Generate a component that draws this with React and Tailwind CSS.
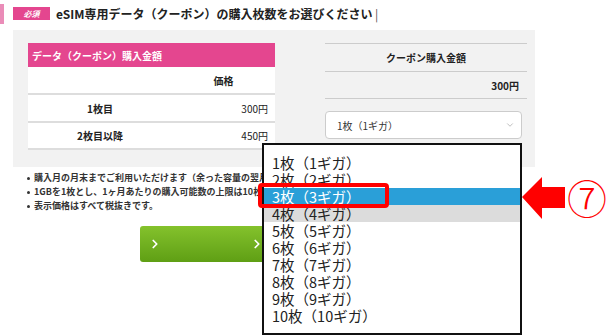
import React from 'react';
import { ChevronDown, ChevronRight } from 'lucide-react';

const options = Array.from({ length: 10 }, (_, i) => `${i + 1}枚（${i + 1}ギガ）`);

const App = () => {
    return (
        <div className="relative w-[609px] h-[336px] overflow-hidden bg-white text-[#222] font-['Noto_Sans_CJK_JP',sans-serif]">

            {/* 見出し */}
            <div className="flex items-center h-[26px] pt-[1px]">
                <div className="w-[4px] h-[20px] bg-[#ea8cb8]"></div>
                <div className="ml-[9px] w-[37px] h-[13px] bg-[#e4468f] flex items-center justify-center text-white text-[8px] font-bold italic leading-none">必須</div>
                <div className="ml-[6px] text-[12px] font-bold leading-none">
                    eSIM専用データ（クーポン）の購入枚数をお選びください <span className="font-normal text-[#555]">|</span>
                </div>
            </div>

            {/* グレーのパネル */}
            <div className="ml-[13px] mt-[4px] w-[522px] bg-[#f2f2f2] flex pt-[13px] pb-[17px] pl-[15px]">
                {/* 左テーブル */}
                <div className="w-[247px] bg-white text-[10px] font-bold">
                    <div className="h-[24px] bg-[#e4468f] text-white flex items-center pl-[4px]">データ（クーポン）購入金額</div>
                    <div className="h-[28px] flex items-center border-b-2 border-[#ddd]">
                        <div className="w-[144px]"></div>
                        <div className="flex-1 text-center">価格</div>
                    </div>
                    <div className="h-[28px] flex items-center border-b-2 border-[#ddd]">
                        <div className="w-[144px] text-center">1枚目</div>
                        <div className="flex-1 text-right pr-[7px] font-normal">300円</div>
                    </div>
                    <div className="h-[27px] flex items-center border-b-2 border-[#ddd]">
                        <div className="w-[144px] text-center">2枚目以降</div>
                        <div className="flex-1 text-right pr-[7px] font-normal">450円</div>
                    </div>
                </div>

                {/* 右カラム */}
                <div className="ml-[50px] w-[202px] text-[10px] font-bold">
                    <div className="h-[29px] flex items-center justify-center border-y border-[#ccc]">クーポン購入金額</div>
                    <div className="h-[27px] flex items-center justify-end pr-[8px] border-b border-[#ccc]">300円</div>
                    <div className="mt-[12px] w-[197px] h-[28px] bg-white border border-[#ccc] rounded-[4px] flex items-center justify-between pl-[11px] pr-[6px] font-normal text-[#333]">
                        <span>1枚（1ギガ）</span>
                        <ChevronDown size={10} strokeWidth={1.5} className="text-[#999]" />
                    </div>
                </div>
            </div>

            {/* 注意書き (右側はプルダウンの下に隠れる) */}
            <ul className="mt-[4px] ml-[27px] w-[235px] overflow-hidden text-[9px] leading-[14px] text-[#333] font-bold">
                <li className="flex items-center gap-[4px] whitespace-nowrap"><span className="w-[3px] h-[3px] shrink-0 rounded-full bg-[#333]"></span>購入月の月末までご利用いただけます（余った容量の翌月への繰り越しはできません）</li>
                <li className="flex items-center gap-[4px] whitespace-nowrap"><span className="w-[3px] h-[3px] shrink-0 rounded-full bg-[#333]"></span>1GBを1枚とし、1ヶ月あたりの購入可能数の上限は10枚です。</li>
                <li className="flex items-center gap-[4px] whitespace-nowrap"><span className="w-[3px] h-[3px] shrink-0 rounded-full bg-[#333]"></span>表示価格はすべて税抜きです。</li>
            </ul>

            {/* 次へボタン */}
            <div className="ml-[140px] mt-[13px] w-[270px] h-[36px] rounded-[3px] bg-gradient-to-b from-[#84c22c] to-[#5f9f14] flex items-center justify-between px-[8px] text-white">
                <ChevronRight size={14} strokeWidth={3} />
                <ChevronRight size={14} strokeWidth={3} className="mr-[138px]" />
            </div>

            {/* プルダウン(開いた状態) */}
            <div className="absolute left-[262px] top-[143px] w-[260px] h-[192px] bg-white border-2 border-[#111] pt-[9px] text-[14.5px] text-[#222] font-normal">
                {options.map((opt, i) => (
                    <div
                        key={opt}
                        className={`h-[17px] leading-[17px] pl-[8px] ${i === 2 ? 'bg-[#2a9fd8] text-white' : i === 3 ? 'bg-[#dcdcdc]' : ''}`}
                    >
                        {opt}
                    </div>
                ))}
            </div>

            {/* 赤枠 */}
            <div className="absolute left-[258px] top-[183px] w-[131px] h-[25px] border-4 border-[#ff0000] rounded-[4px]"></div>

            {/* 矢印 */}
            <svg className="absolute left-[520px] top-[175px]" width="48" height="46" viewBox="0 0 48 46">
                <polygon points="2,22 22,2 22,12 45,12 45,33 22,33 22,44" fill="#ff0000" />
            </svg>

            {/* ⑦ */}
            <div className="absolute left-[566px] top-[174px] w-[42px] text-center text-[40px] leading-[46px] text-[#ff0000] font-['Noto_Sans_CJK_JP',sans-serif] font-light">⑦</div>
        </div>
    );
};

export default App;
